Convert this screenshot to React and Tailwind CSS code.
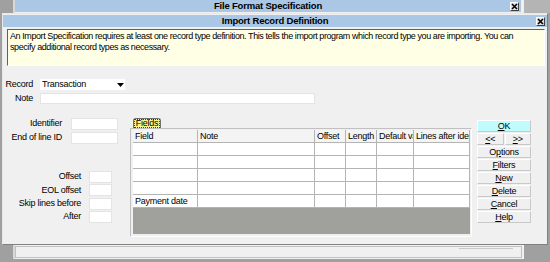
import React from 'react';

const columns = [
  { name: 'Field', w: 'w-[65px]' },
  { name: 'Note', w: 'w-[117px]' },
  { name: 'Offset', w: 'w-[31px]' },
  { name: 'Length', w: 'w-[31px]' },
  { name: 'Default value', w: 'w-[37px]' },
  { name: 'Lines after identifier', w: 'w-[56px]' },
];

const rows = ['', '', '', '', 'Payment date'];

const CloseBox = () => (
  <div className="flex h-[9px] w-[9px] items-center justify-center border border-t-white border-l-white border-r-[#404040] border-b-[#404040] bg-[#e0e0e0]">
    <svg width="7" height="7" viewBox="0 0 7 7">
      <path d="M1 1L6 6M6 1L1 6" stroke="#000" strokeWidth="1.6" />
    </svg>
  </div>
);

const TitleBar = ({ title, className }) => (
  <div className={`relative flex h-[12px] items-center justify-center bg-[#aac7e5] ${className}`}>
    <span className="text-[9.5px] font-bold leading-none tracking-[-0.2px]">{title}</span>
    <div className="absolute right-[2px] top-[1.5px]">
      <CloseBox />
    </div>
  </div>
);

const Input = ({ className }) => (
  <div className={`bg-white border border-[#e4e4e4] ${className}`} />
);

const Btn = ({ children, className = '' }) => (
  <div className={`flex h-[12px] min-w-0 items-center justify-center border border-t-white border-l-white border-r-[#c8c8c8] border-b-[#c8c8c8] leading-none ${className}`}>
    {children}
  </div>
);

export default function App() {
  return (
    <div className="relative h-[262px] w-[550px] overflow-hidden bg-[#a0a0a0] font-['Liberation_Sans',Arial,sans-serif] text-[9px] tracking-[-0.25px] text-black">
      {/* parent window */}
      <div className="absolute left-[13px] top-0 flex h-[259px] w-[511px] flex-col border-l-2 border-[#d8d8d8] bg-[#f0f0f0]">
        <TitleBar title="File Format Specification" className="w-[506px]" />
        <div className="relative mt-auto mb-[1px] h-[12px] w-[507px] border border-[#c0c0c0] bg-[#f0f0f0]">
          <div className="absolute left-[443px] top-[1px] h-[1px] w-[54px] bg-[#c8c8c8]" />
        </div>
      </div>
      <div className="absolute left-[524px] top-0 h-[13px] w-[26px] bg-[#b4b4b4]" />

      {/* dialog */}
      <div className="absolute left-[2px] top-[13px] flex h-[232px] w-[546px] flex-col border border-t-[#e8e8e8] border-l-[#e8e8e8] border-r-[#808080] border-b-[#808080] bg-[#f0f0f0]">
        <TitleBar title="Import Record Definition" className="mt-[1px]" />

        <div className="mt-[2px] ml-[4px] mr-[2px] h-[37px] border border-t-[#606060] border-l-[#606060] border-r-white border-b-white bg-[#ffffe6] pl-[2px] pr-[26px] pt-[1px] leading-[11px] tracking-[-0.42px]">
          An Import Specification requires at least one record type definition. This tells the import program which record type you are importing. You can specify additional record types as necessary.
        </div>

        {/* record row */}
        <div className="mt-[13px] flex h-[11px] items-center">
          <span className="w-[30px] whitespace-nowrap text-right">Record</span>
          <div className="ml-[7px] flex h-[11px] w-[85px] items-center bg-white">
            <span className="flex-1 pl-[2px]">Transaction</span>
            <div className="flex h-[10px] w-[10px] items-center justify-center">
              <svg width="7" height="4" viewBox="0 0 7 4">
                <path d="M0 0H7L3.5 4Z" fill="#000" />
              </svg>
            </div>
          </div>
        </div>
        <div className="mt-[3px] flex h-[11px] items-center">
          <span className="w-[30px] text-right">Note</span>
          <Input className="ml-[7px] h-[11px] w-[275px]" />
        </div>

        {/* main area */}
        <div className="mt-[14px] flex">
          {/* left fields */}
          <div className="flex w-[127px] flex-col">
            <div className="flex h-[12px] items-center">
              <span className="w-[59px] whitespace-nowrap text-right">Identifier</span>
              <Input className="ml-[9px] h-[12px] w-[47px]" />
            </div>
            <div className="mt-[2px] flex h-[12px] items-center">
              <span className="w-[59px] whitespace-nowrap text-right">End of line ID</span>
              <Input className="ml-[9px] h-[12px] w-[47px]" />
            </div>
            <div className="mt-[27px] flex flex-col gap-[1.3px]">
              {['Offset', 'EOL offset', 'Skip lines before', 'After'].map((label) => (
                <div key={label} className="flex h-[12px] items-center">
                  <span className="w-[78px] whitespace-nowrap text-right">{label}</span>
                  <Input className="ml-[8px] h-[12px] w-[23px]" />
                </div>
              ))}
            </div>
          </div>

          {/* grid group */}
          <div className="flex w-[342px] flex-col">
            <div className="ml-[3px] flex h-[10px] w-[28px] items-center justify-center rounded-t-[3px] border border-b-0 border-[#707070] bg-[#f6f68a]">
              <span className="border border-dotted border-[#404040] px-[1px] leading-[7px]">Fields</span>
            </div>
            <div className="h-[109px] border border-t-[#c0c0c0] border-l-[#c0c0c0] border-r-white border-b-white pl-[2px] pt-[1px]">
              <div className="flex w-[337px] flex-col">
                <div className="flex h-[13px] bg-[#f4f4f4]">
                  {columns.map((c) => (
                    <div key={c.name} className={`${c.w} overflow-hidden whitespace-nowrap border-r border-b border-[#b4b4b4] pl-[2px] leading-[12px]`}>
                      {c.name}
                    </div>
                  ))}
                </div>
                {rows.map((r, i) => (
                  <div key={i} className="flex h-[13px] bg-white">
                    {columns.map((c, j) => (
                      <div key={c.name} className={`${c.w} overflow-hidden whitespace-nowrap border-r border-b border-[#b4b4b4] pl-[2px] leading-[12px]`}>
                        {j === 0 ? r : ''}
                      </div>
                    ))}
                  </div>
                ))}
                <div className="h-[26px] bg-[#a0a09c]" />
              </div>
            </div>
          </div>

          {/* buttons */}
          <div className="ml-[5px] mt-[2px] flex w-[54px] flex-col gap-[1px]">
            <Btn className="h-[11px] bg-[#c0fcfc]"><span><u>O</u>K</span></Btn>
            <div className="flex gap-[1px]">
              <Btn className="flex-1"><span><u>&lt;</u>&lt;</span></Btn>
              <Btn className="flex-1"><span><u>&gt;</u>&gt;</span></Btn>
            </div>
            <Btn>O<u>p</u>tions</Btn>
            <Btn><u>F</u>ilters</Btn>
            <Btn><u>N</u>ew</Btn>
            <Btn><u>D</u>elete</Btn>
            <Btn><u>C</u>ancel</Btn>
            <Btn><u>H</u>elp</Btn>
          </div>
        </div>
      </div>
    </div>
  );
}
